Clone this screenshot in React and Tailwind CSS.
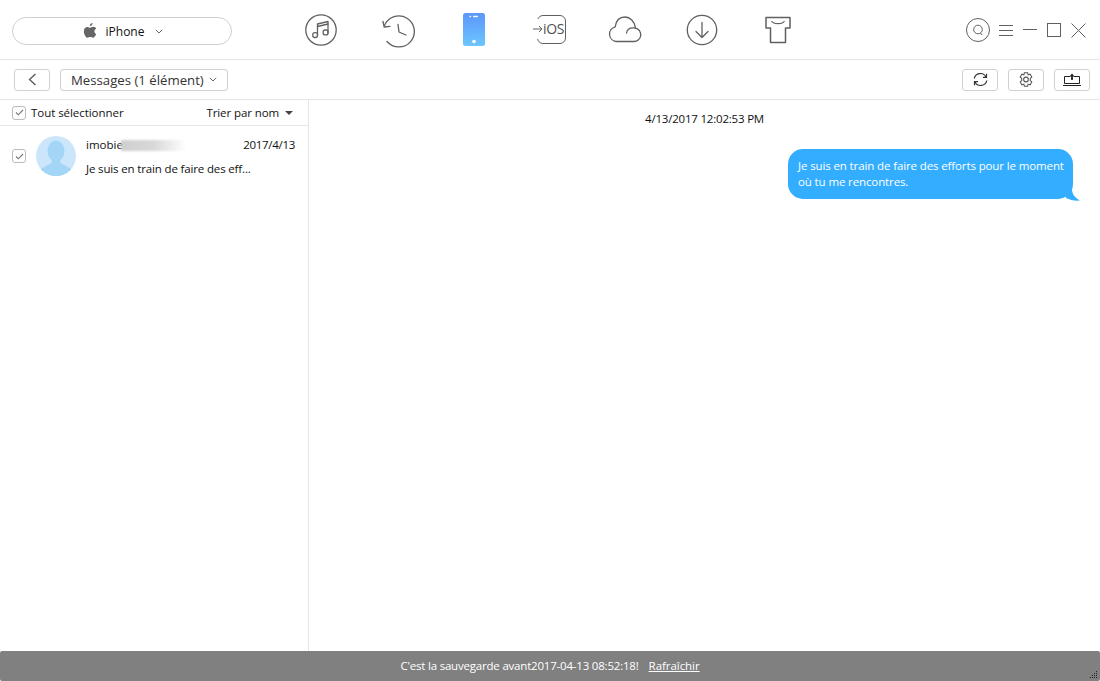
import React from "react";

const S = ({ w = 34, h = 34, children, vb }) => (
  <svg width={w} height={h} viewBox={vb || `0 0 ${w} ${h}`} fill="none" stroke="#606060" strokeWidth="1.300" strokeLinecap="round" strokeLinejoin="round">{children}</svg>
);

const Music = () => (
  <S><circle cx="17" cy="16" r="15.200" /><path d="M13.500 21V10l10.500-2.500V19" /><path d="M13.500 12.500l10.500-2.500" /><rect x="8.800" y="18.600" width="4.700" height="4.900" rx="2" /><rect x="19.200" y="16" width="4.800" height="4.900" rx="2" /></S>
);
const History = () => (
  <S w={36} h={34}><path d="M3.500 11.500A15.500 15.500 0 1 1 6 27.500" /><path d="M2 7.500l1.200 5.500 5.800-.6" /><path d="M17 10.500l1 7.500 7 3" /></S>
);
const Phone = () => (
  <svg width="22" height="33" viewBox="0 0 22 33">
    <defs><linearGradient id="pg" x1="0" y1="0" x2="0" y2="1"><stop offset="0" stopColor="#5b96fb" /><stop offset="1" stopColor="#6cc6fd" /></linearGradient></defs>
    <rect width="22" height="33" rx="2.500" fill="url(#pg)" />
    <rect x="6.500" y="2.800" width="1.600" height="1.400" fill="#fff" /><rect x="10" y="2.800" width="5" height="1.400" rx=".7" fill="#fff" />
    <circle cx="11" cy="28.500" r="1.800" fill="#fff" />
  </svg>
);
const Ios = () => (
  <div className="relative w-[34px] h-[32px]">
    <div className="absolute left-[4px] top-0 w-[29px] h-[29px] mt-[1px] rounded-[6px] border-[1.5px] border-[#606060] bg-white" />
    <div className="absolute left-[0px] top-[5px] h-[20px] flex items-center bg-white text-[#505050] text-[14px] leading-[20px] font-['Open_Sans',sans-serif] tracking-[-0.3px]">
      <svg width="10" height="8" viewBox="0 0 10 8" fill="none" stroke="#606060" strokeWidth="1"><path d="M0 4h9M6 1l3 3-3 3" /></svg>
      <span>iOS</span>
    </div>
  </div>
);
const Cloud = () => (
  <S w={34} h={28}><path d="M8 26.500h18a6.800 6.800 0 0 0 1.600-13.400C26.600 6.300 22 2 17 2c-5.500 0-9 4-9.800 9.800A7.500 7.500 0 0 0 8 26.500z" /><path d="M18.500 18c.6-3.800 3.400-5.800 8.800-5" /></S>
);
const Down = () => (
  <S><circle cx="17" cy="16" r="14.700" /><path d="M17 8.500v15M11 17.500l6 6 6-6" /></S>
);
const Shirt = () => (
  <svg width="26" height="28" viewBox="0 0 26 28" fill="none" stroke="#606060" strokeWidth="1.500" strokeLinejoin="round"><path d="M1 1.500h24v10.500h-4.500v14.500H5.500V12H1z" /><path d="M6.500 5c2 3.500 11 3.500 13 0" strokeWidth="1.100" /></svg>
);
const Apple = () => (
  <svg width="14" height="15" viewBox="0 0 14 16" fill="#666"><path d="M9.800 0c.1 1.800-1.500 3.400-3.100 3.300C6.500 1.700 8.200.1 9.800 0zM13.600 11.600c-.7 1.700-2 4.100-3.400 4.100-1.100 0-1.500-.7-2.900-.7s-1.800.7-2.900.7C2.600 15.700.4 11.800.4 8.700c0-2.900 1.900-4.500 3.700-4.500 1.200 0 2.200.8 3 .8.700 0 1.900-.9 3.300-.9 1.100 0 2.400.5 3.200 1.700-2.700 1.700-2.300 4.800 0 5.800z" /></svg>
);
const Check = ({ cls = "" }) => (
  <span className={`w-[14px] h-[14px] rounded-[3px] border border-[#bbb] bg-white flex items-center justify-center shrink-0 ${cls}`}>
    <svg width="9" height="7" viewBox="0 0 9 7" fill="none" stroke="#777" strokeWidth="1.100"><path d="M1 3.500l2.300 2.300L8 1" /></svg>
  </span>
);
const Chevron = () => (
  <svg width="8" height="5" viewBox="0 0 8 5" fill="none" stroke="#666" strokeWidth="1"><path d="M.8.800L4 4l3.200-3.200" /></svg>
);
const ToolBtn = ({ children, w = "w-[36px]" }) => (
  <div className={`${w} h-[22px] rounded-[3px] border border-[#d0d0d0] bg-white flex items-center justify-center`}>{children}</div>
);

export default function App() {
  return (
    <div className="relative w-[1100px] h-[681px] bg-white overflow-hidden flex flex-col text-[11.5px] text-[#111] font-['Open_Sans','Noto_Sans',sans-serif]">
      <header className="h-[60px] shrink-0 border-b border-[#e6e6e6] flex items-center relative">
        <div className="ml-[12px] w-[220px] h-[28px] mt-[2px] rounded-[14px] border border-[#cfcfcf] flex items-center justify-center gap-[8px] pl-[2px]">
          <Apple />
          <span className="text-[12px] ml-[1px] mt-[2px]">iPhone</span>
          <span className="ml-[3px] mt-[2px]"><Chevron /></span>
        </div>
        <nav className="absolute left-[304px] top-[14px] flex items-start">
          <div className="w-[34px] h-[32px]"><Music /></div>
          <div className="ml-[43px] w-[36px] h-[32px]"><History /></div>
          <div className="ml-[46px] mt-[-1px]"><Phone /></div>
          <div className="ml-[48px]"><Ios /></div>
          <div className="ml-[41px] mt-[1px]"><Cloud /></div>
          <div className="ml-[43px]"><Down /></div>
          <div className="ml-[46px] mt-[2px]"><Shirt /></div>
        </nav>
        <div className="absolute left-[966px] top-[18px] flex items-center">
          <svg width="24" height="24" viewBox="0 0 24 24" fill="none" stroke="#606060"><circle cx="12" cy="12" r="11.500" /><circle cx="12" cy="11.500" r="4.300" /><path d="M14.500 15l1.500 2" /></svg>
          <svg className="ml-[9px]" width="15" height="12" viewBox="0 0 15 12" fill="none" stroke="#606060"><path d="M0 1.500h14M0 6.500h14M0 11.500h14" /></svg>
          <svg className="ml-[9px]" width="15" height="12" viewBox="0 0 15 12" fill="none" stroke="#606060"><path d="M0 5.500h14" /></svg>
          <svg className="ml-[9px]" width="14" height="14" viewBox="0 0 14 14" fill="none" stroke="#606060"><rect x=".5" y=".5" width="13" height="13" /></svg>
          <svg className="ml-[10px]" width="15" height="15" viewBox="0 0 15 15" fill="none" stroke="#606060"><path d="M.5.500l14 14M14.500.500l-14 14" /></svg>
        </div>
      </header>

      <div className="h-[40px] shrink-0 border-b border-[#e6e6e6] flex items-center pl-[14px] pr-[10px]">
        <div className="w-[36px] h-[22px] rounded-[3px] border border-[#d0d0d0] flex items-center justify-center">
          <svg width="9" height="13" viewBox="0 0 9 13" fill="none" stroke="#555" strokeWidth="1.300"><path d="M7.500 1L1.500 6.500l6 5.500" /></svg>
        </div>
        <div className="ml-[10px] w-[168px] h-[22px] rounded-[3px] border border-[#d0d0d0] flex items-center pl-[10px] text-[13.2px] text-[#333]">
          <span className="mt-[2px]">Messages (1 élément)</span>
          <span className="ml-[5px] mb-[1px]"><Chevron /></span>
        </div>
        <div className="ml-auto flex gap-[10px]">
          <ToolBtn>
            <svg width="15" height="15" viewBox="0 0 15 15" fill="none" stroke="#333" strokeWidth="1.200"><path d="M1.200 6.500A6.300 6.300 0 0 1 13 5M13.800 8.500A6.300 6.300 0 0 1 2 10" /><path d="M13.500 1.800V5.300H10M1.500 13.200V9.700H5" /></svg>
          </ToolBtn>
          <ToolBtn>
            <svg width="14" height="15" viewBox="0 0 13 14" fill="none" stroke="#555" strokeWidth="1"><path d="M5 .700h3l.5 2 1.900-.6 1.500 2.600L10.500 6v2l1.400 1.300-1.500 2.600-1.900-.6-.5 2H5l-.5-2-1.900.6L1.100 9.300 2.500 8V6L1.100 4.700l1.500-2.600 1.900.6z" /><circle cx="6.500" cy="7" r="2.200" /></svg>
          </ToolBtn>
          <ToolBtn>
            <svg width="18" height="14" viewBox="0 0 18 14" fill="none" stroke="#222"><path d="M7 3.500H1.500v7h15v-7H11M0 12.500h18" /><path d="M9 3v4" strokeWidth="1.800" /><path d="M6.500 3.500L9 .5l2.500 3z" fill="#222" stroke="none" /></svg>
          </ToolBtn>
        </div>
      </div>

      <main className="flex-1 flex min-h-0">
        <aside className="w-[309px] shrink-0 border-r border-[#e6e6e6] flex flex-col">
          <div className="h-[26px] border-b border-[#e6e6e6] flex items-center pl-[12px] pr-[15px] shrink-0">
            <Check />
            <span className="ml-[5px] tracking-[-0.05px]">Tout sélectionner</span>
            <span className="ml-auto tracking-[-0.1px]">Trier par nom</span>
            <span className="ml-[6px] w-0 h-0 border-x-[4px] border-x-transparent border-t-[4px] border-t-[#444]" />
          </div>
          <div className="flex items-start pl-[12px] pr-[13px] pt-[10px]">
            <Check cls="mt-[13px]" />
            <div className="ml-[10px] w-[40px] h-[40px] rounded-full bg-[#cbe6fb] overflow-hidden shrink-0">
              <svg width="40" height="40" viewBox="0 0 40 40" fill="#a3d5f7"><ellipse cx="20" cy="15" rx="8.500" ry="10.500" /><path d="M15.500 24h9v3l10 5.500A18 18 0 0 1 40 40H0a18 18 0 0 1 5.500-7.500l10-5.500z" /></svg>
            </div>
            <div className="ml-[10px] flex-1 min-w-0">
              <div className="flex items-center h-[18px]">
                <span>imobie</span>
                <span className="w-[65px] h-[11px] ml-[-2px] bg-gradient-to-r from-[#cfcfcf] via-[#d8d8d8] to-white blur-[1px]" />
                <span className="ml-auto tracking-[-0.3px]">2017/4/13</span>
              </div>
              <div className="mt-[6px] h-[18px] leading-[18px] tracking-[-0.15px]">Je suis en train de faire des eff...</div>
            </div>
          </div>
        </aside>
        <section className="flex-1 flex flex-col relative">
          <div className="text-center h-[18px] leading-[18px] mt-[10px] tracking-[-0.2px]">4/13/2017 12:02:53 PM</div>
          <div className="relative self-end mr-[27px] mt-[21px] w-[285px] h-[50px] rounded-[15px] bg-[#33adff] text-white px-[10px] py-[9px] leading-[16px] whitespace-nowrap tracking-[-0.12px]">
            Je suis en train de faire des efforts pour le moment<br />où tu me rencontres.
            <svg className="absolute right-[-7px] bottom-[-2px]" width="14" height="12" viewBox="0 0 14 12" fill="#33adff"><path d="M0 0h6c0 5 3 9 8 11.500C9 12 4 11 0 9z" /></svg>
          </div>
        </section>
      </main>

      <div className="absolute left-0 right-0 bottom-0 h-[30px] bg-[#808080] rounded-[2px] flex items-center justify-center text-white tracking-[-0.2px]">
        <span>C'est la sauvegarde avant2017-04-13 08:52:18!</span>
        <span className="ml-[10px] underline tracking-[-0.05px]">Rafraîchir</span>
        <div className="absolute right-[3px] bottom-[3px] grid grid-cols-4 gap-[1px]">
          {[0,0,0,1,0,0,1,1,0,1,1,1,1,1,1,1].map((v, i) => (
            <span key={i} className={v ? "w-[1px] h-[1px] bg-[#222]" : "w-[1px] h-[1px]"} />
          ))}
        </div>
      </div>
    </div>
  );
}
